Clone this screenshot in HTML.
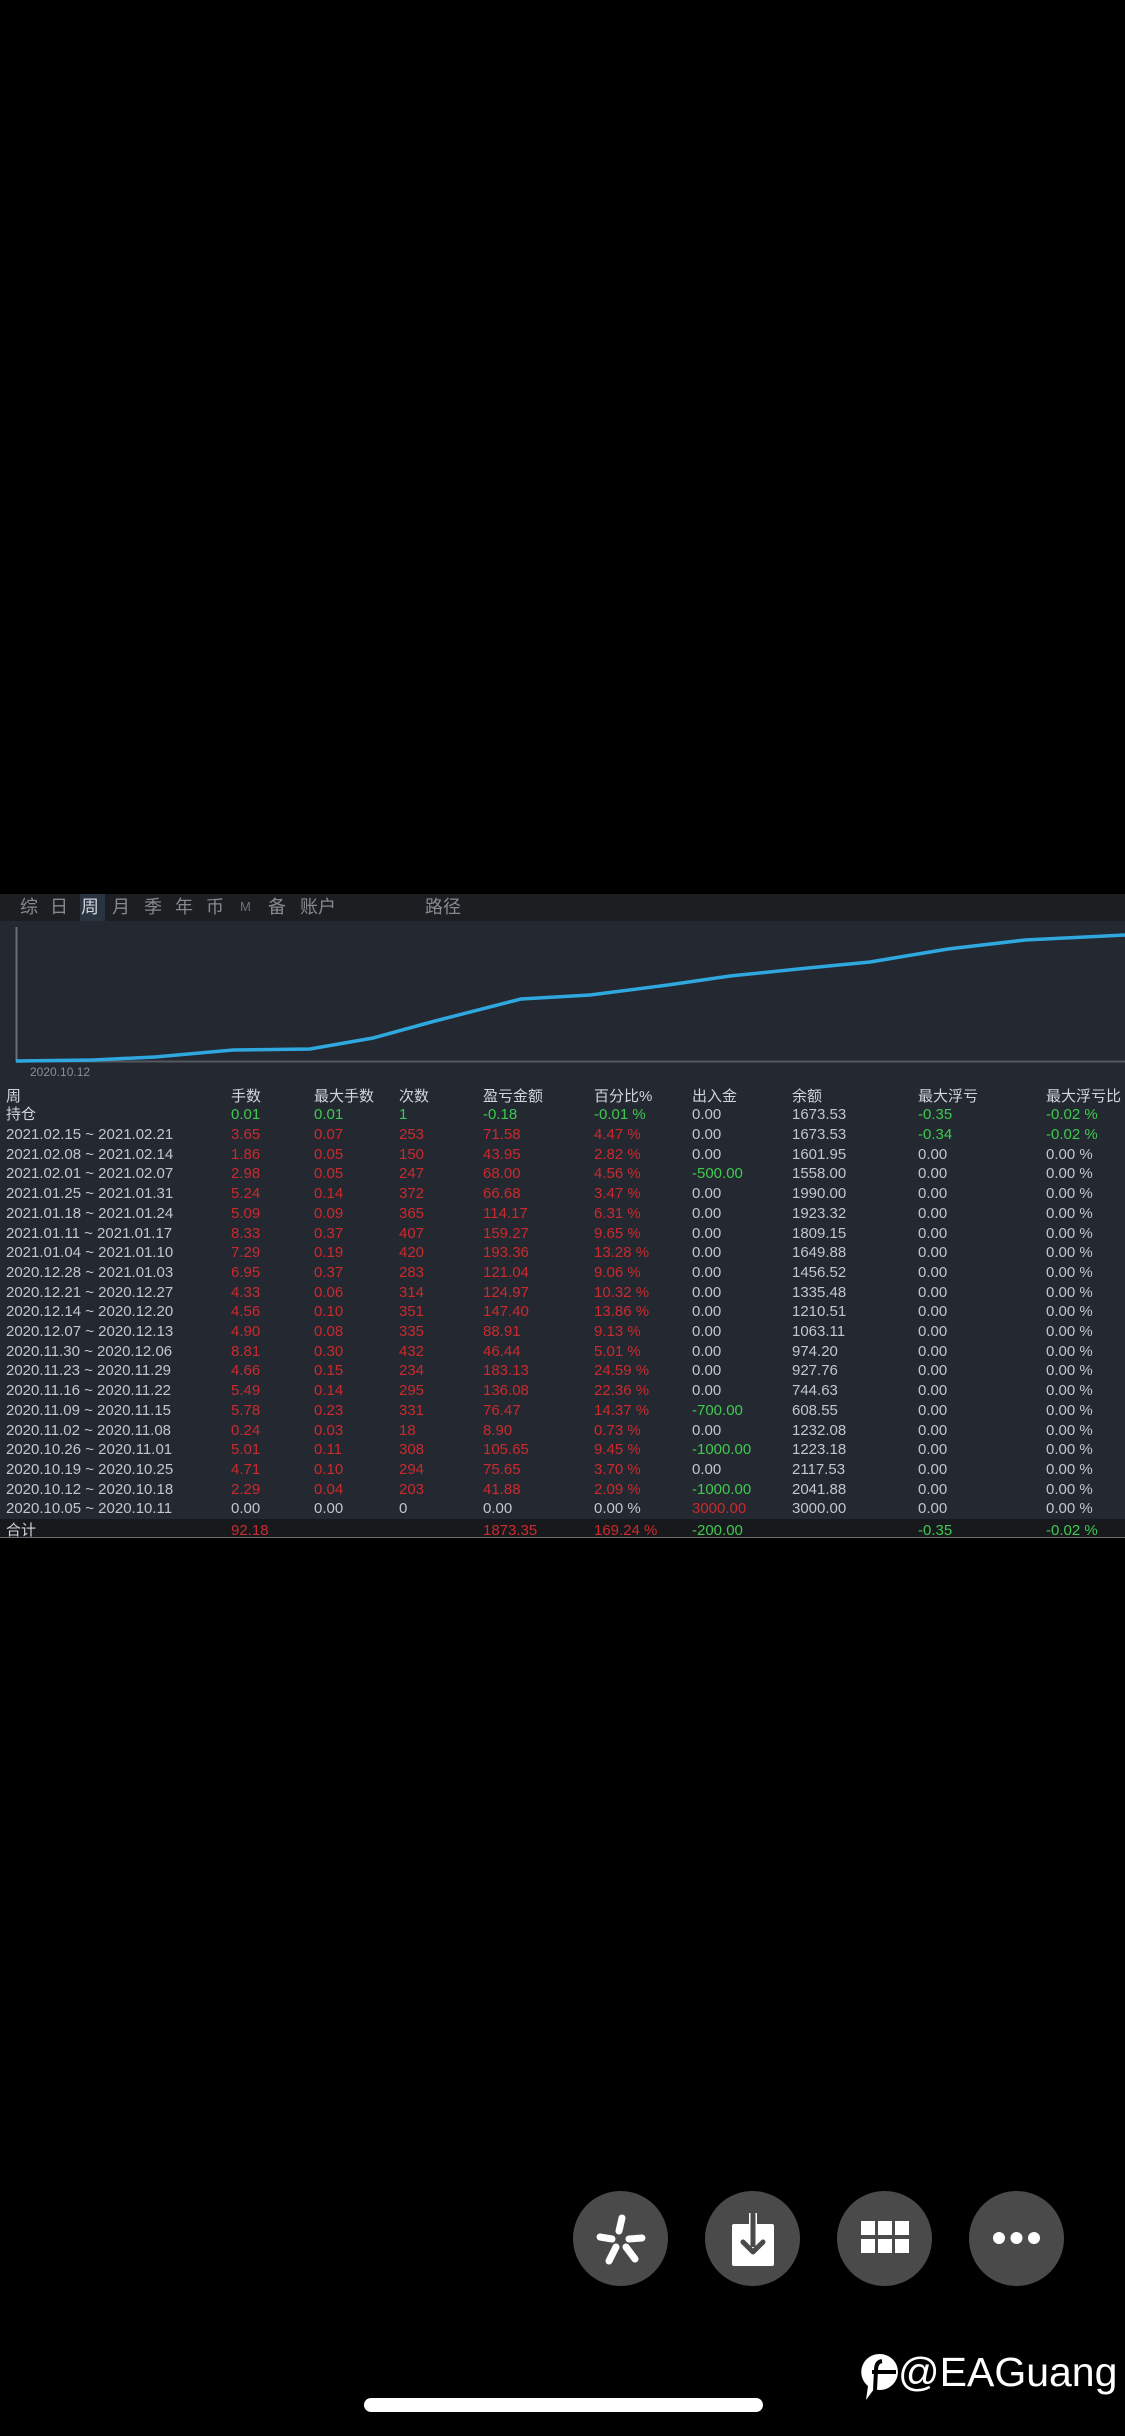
<!DOCTYPE html>
<html><head><meta charset="utf-8"><style>
*{margin:0;padding:0;box-sizing:border-box}
body{width:1125px;height:2436px;background:#000;position:relative;overflow:hidden;font-family:"Liberation Sans","Noto Sans CJK SC",sans-serif}
.abs{position:absolute}
.tabs{left:0;top:894px;width:1125px;height:27px;background:#1c1e22}
.tabs span{position:absolute;top:2px;font-size:18px;line-height:22px;color:#868a90}
.chart{left:0;top:921px;width:1125px;height:143px;background:#232831}
.table{left:0;top:1064px;width:1125px;height:455px;background:#232831}
.sum{left:0;top:1519px;width:1125px;height:19px;background:#17191c;border-bottom:1px solid #6a6d72;overflow:hidden}
.r{position:absolute;left:0;width:1125px;height:20px;font-size:15px;line-height:20px;color:#c2c6cd;white-space:nowrap}
.r span{position:absolute;top:0}
.g{color:#3fc94f}.d{color:#cc2a2c}.h{color:#d2d5da}
.c0{left:6px}.c1{left:231px}.c2{left:314px}.c3{left:399px}.c4{left:483px}.c5{left:594px}.c6{left:692px}.c7{left:792px}.c8{left:918px}.c9{left:1046px}
.btn{position:absolute;top:2191px;width:95px;height:95px;border-radius:50%;background:#4a4a4a}
</style></head><body>
<div class="abs tabs">
<span style="left:20px">综</span><span style="left:50px">日</span>
<span style="left:80px;top:0;width:25px;height:27px;background:#2a3340;color:#d0d4da;padding-left:1px;line-height:27px">周</span>
<span style="left:112px">月</span><span style="left:144px">季</span><span style="left:175px">年</span><span style="left:206px">币</span>
<span style="left:240px;font-size:13px;color:#6c7076">M</span><span style="left:268px">备</span><span style="left:300px">账户</span><span style="left:425px">路径</span>
</div>
<div class="abs chart">
<svg width="1125" height="143" style="position:absolute;left:0;top:0">
<line x1="16.5" y1="6" x2="16.5" y2="141" stroke="#6a6e74" stroke-width="2"/>
<line x1="16" y1="140.5" x2="1125" y2="140.5" stroke="#55595f" stroke-width="2"/>
<polyline fill="none" stroke="#2fa8e0" stroke-width="3.5" points="16,140 93,139 155,136 233,129 310,128 373,117 435,100 521,78 590,74 668,64 730,55 808,47 870,41 948,28 1025,19 1125,14"/>
</svg>
</div>
<div class="abs table"></div>
<div class="abs" style="left:30px;top:1065px;font-size:12px;color:#8a8f96;line-height:14px">2020.10.12</div>
<div class="abs sum"></div>

<div class="r h" style="top:1087px"><span class="c0">周</span><span class="c1">手数</span><span class="c2">最大手数</span><span class="c3">次数</span><span class="c4">盈亏金额</span><span class="c5">百分比%</span><span class="c6">出入金</span><span class="c7">余额</span><span class="c8">最大浮亏</span><span class="c9">最大浮亏比</span></div>
<div class="r" style="top:1105px"><span class="c0 h">持仓</span><span class="c1 g">0.01</span><span class="c2 g">0.01</span><span class="c3 g">1</span><span class="c4 g">-0.18</span><span class="c5 g">-0.01 %</span><span class="c6">0.00</span><span class="c7">1673.53</span><span class="c8 g">-0.35</span><span class="c9 g">-0.02 %</span></div>
<div class="r" style="top:1125px"><span class="c0">2021.02.15 ~ 2021.02.21</span><span class="c1 d">3.65</span><span class="c2 d">0.07</span><span class="c3 d">253</span><span class="c4 d">71.58</span><span class="c5 d">4.47 %</span><span class="c6">0.00</span><span class="c7">1673.53</span><span class="c8 g">-0.34</span><span class="c9 g">-0.02 %</span></div>
<div class="r" style="top:1144.7px"><span class="c0">2021.02.08 ~ 2021.02.14</span><span class="c1 d">1.86</span><span class="c2 d">0.05</span><span class="c3 d">150</span><span class="c4 d">43.95</span><span class="c5 d">2.82 %</span><span class="c6">0.00</span><span class="c7">1601.95</span><span class="c8">0.00</span><span class="c9">0.00 %</span></div>
<div class="r" style="top:1164.4px"><span class="c0">2021.02.01 ~ 2021.02.07</span><span class="c1 d">2.98</span><span class="c2 d">0.05</span><span class="c3 d">247</span><span class="c4 d">68.00</span><span class="c5 d">4.56 %</span><span class="c6 g">-500.00</span><span class="c7">1558.00</span><span class="c8">0.00</span><span class="c9">0.00 %</span></div>
<div class="r" style="top:1184.1px"><span class="c0">2021.01.25 ~ 2021.01.31</span><span class="c1 d">5.24</span><span class="c2 d">0.14</span><span class="c3 d">372</span><span class="c4 d">66.68</span><span class="c5 d">3.47 %</span><span class="c6">0.00</span><span class="c7">1990.00</span><span class="c8">0.00</span><span class="c9">0.00 %</span></div>
<div class="r" style="top:1203.8px"><span class="c0">2021.01.18 ~ 2021.01.24</span><span class="c1 d">5.09</span><span class="c2 d">0.09</span><span class="c3 d">365</span><span class="c4 d">114.17</span><span class="c5 d">6.31 %</span><span class="c6">0.00</span><span class="c7">1923.32</span><span class="c8">0.00</span><span class="c9">0.00 %</span></div>
<div class="r" style="top:1223.5px"><span class="c0">2021.01.11 ~ 2021.01.17</span><span class="c1 d">8.33</span><span class="c2 d">0.37</span><span class="c3 d">407</span><span class="c4 d">159.27</span><span class="c5 d">9.65 %</span><span class="c6">0.00</span><span class="c7">1809.15</span><span class="c8">0.00</span><span class="c9">0.00 %</span></div>
<div class="r" style="top:1243.2px"><span class="c0">2021.01.04 ~ 2021.01.10</span><span class="c1 d">7.29</span><span class="c2 d">0.19</span><span class="c3 d">420</span><span class="c4 d">193.36</span><span class="c5 d">13.28 %</span><span class="c6">0.00</span><span class="c7">1649.88</span><span class="c8">0.00</span><span class="c9">0.00 %</span></div>
<div class="r" style="top:1262.9px"><span class="c0">2020.12.28 ~ 2021.01.03</span><span class="c1 d">6.95</span><span class="c2 d">0.37</span><span class="c3 d">283</span><span class="c4 d">121.04</span><span class="c5 d">9.06 %</span><span class="c6">0.00</span><span class="c7">1456.52</span><span class="c8">0.00</span><span class="c9">0.00 %</span></div>
<div class="r" style="top:1282.6px"><span class="c0">2020.12.21 ~ 2020.12.27</span><span class="c1 d">4.33</span><span class="c2 d">0.06</span><span class="c3 d">314</span><span class="c4 d">124.97</span><span class="c5 d">10.32 %</span><span class="c6">0.00</span><span class="c7">1335.48</span><span class="c8">0.00</span><span class="c9">0.00 %</span></div>
<div class="r" style="top:1302.3px"><span class="c0">2020.12.14 ~ 2020.12.20</span><span class="c1 d">4.56</span><span class="c2 d">0.10</span><span class="c3 d">351</span><span class="c4 d">147.40</span><span class="c5 d">13.86 %</span><span class="c6">0.00</span><span class="c7">1210.51</span><span class="c8">0.00</span><span class="c9">0.00 %</span></div>
<div class="r" style="top:1322px"><span class="c0">2020.12.07 ~ 2020.12.13</span><span class="c1 d">4.90</span><span class="c2 d">0.08</span><span class="c3 d">335</span><span class="c4 d">88.91</span><span class="c5 d">9.13 %</span><span class="c6">0.00</span><span class="c7">1063.11</span><span class="c8">0.00</span><span class="c9">0.00 %</span></div>
<div class="r" style="top:1341.7px"><span class="c0">2020.11.30 ~ 2020.12.06</span><span class="c1 d">8.81</span><span class="c2 d">0.30</span><span class="c3 d">432</span><span class="c4 d">46.44</span><span class="c5 d">5.01 %</span><span class="c6">0.00</span><span class="c7">974.20</span><span class="c8">0.00</span><span class="c9">0.00 %</span></div>
<div class="r" style="top:1361.4px"><span class="c0">2020.11.23 ~ 2020.11.29</span><span class="c1 d">4.66</span><span class="c2 d">0.15</span><span class="c3 d">234</span><span class="c4 d">183.13</span><span class="c5 d">24.59 %</span><span class="c6">0.00</span><span class="c7">927.76</span><span class="c8">0.00</span><span class="c9">0.00 %</span></div>
<div class="r" style="top:1381.1px"><span class="c0">2020.11.16 ~ 2020.11.22</span><span class="c1 d">5.49</span><span class="c2 d">0.14</span><span class="c3 d">295</span><span class="c4 d">136.08</span><span class="c5 d">22.36 %</span><span class="c6">0.00</span><span class="c7">744.63</span><span class="c8">0.00</span><span class="c9">0.00 %</span></div>
<div class="r" style="top:1400.8px"><span class="c0">2020.11.09 ~ 2020.11.15</span><span class="c1 d">5.78</span><span class="c2 d">0.23</span><span class="c3 d">331</span><span class="c4 d">76.47</span><span class="c5 d">14.37 %</span><span class="c6 g">-700.00</span><span class="c7">608.55</span><span class="c8">0.00</span><span class="c9">0.00 %</span></div>
<div class="r" style="top:1420.5px"><span class="c0">2020.11.02 ~ 2020.11.08</span><span class="c1 d">0.24</span><span class="c2 d">0.03</span><span class="c3 d">18</span><span class="c4 d">8.90</span><span class="c5 d">0.73 %</span><span class="c6">0.00</span><span class="c7">1232.08</span><span class="c8">0.00</span><span class="c9">0.00 %</span></div>
<div class="r" style="top:1440.2px"><span class="c0">2020.10.26 ~ 2020.11.01</span><span class="c1 d">5.01</span><span class="c2 d">0.11</span><span class="c3 d">308</span><span class="c4 d">105.65</span><span class="c5 d">9.45 %</span><span class="c6 g">-1000.00</span><span class="c7">1223.18</span><span class="c8">0.00</span><span class="c9">0.00 %</span></div>
<div class="r" style="top:1459.9px"><span class="c0">2020.10.19 ~ 2020.10.25</span><span class="c1 d">4.71</span><span class="c2 d">0.10</span><span class="c3 d">294</span><span class="c4 d">75.65</span><span class="c5 d">3.70 %</span><span class="c6">0.00</span><span class="c7">2117.53</span><span class="c8">0.00</span><span class="c9">0.00 %</span></div>
<div class="r" style="top:1479.6px"><span class="c0">2020.10.12 ~ 2020.10.18</span><span class="c1 d">2.29</span><span class="c2 d">0.04</span><span class="c3 d">203</span><span class="c4 d">41.88</span><span class="c5 d">2.09 %</span><span class="c6 g">-1000.00</span><span class="c7">2041.88</span><span class="c8">0.00</span><span class="c9">0.00 %</span></div>
<div class="r" style="top:1499.3px"><span class="c0">2020.10.05 ~ 2020.10.11</span><span class="c1">0.00</span><span class="c2">0.00</span><span class="c3">0</span><span class="c4">0.00</span><span class="c5">0.00 %</span><span class="c6 d">3000.00</span><span class="c7">3000.00</span><span class="c8">0.00</span><span class="c9">0.00 %</span></div>
<div class="r" style="top:1520px;height:18px;overflow:hidden;line-height:22px"><span class="c0 h">合计</span><span class="c1 d">92.18</span><span class="c4 d">1873.35</span><span class="c5 d">169.24 %</span><span class="c6 g">-200.00</span><span class="c8 g">-0.35</span><span class="c9 g">-0.02 %</span></div>

<div class="btn" style="left:573px"><svg width="95" height="95" viewBox="0 0 95 95"><g stroke="#fff" stroke-width="7" stroke-linecap="round"><line x1="49" y1="27" x2="46" y2="40"/><line x1="27" y1="46" x2="39" y2="48"/><line x1="56" y1="48" x2="69" y2="47"/><line x1="43" y1="56" x2="36" y2="70"/><line x1="53" y1="56" x2="62" y2="68"/></g></svg></div>
<div class="btn" style="left:705px"><svg width="95" height="95" viewBox="0 0 95 95"><rect x="27" y="33" width="42" height="42" rx="2" fill="#fff"/><rect x="44" y="22" width="8" height="14" fill="#fff"/><rect x="45.5" y="22" width="5" height="34" fill="#4a4a4a"/><path d="M38 51 L48 61 L58 51" fill="none" stroke="#4a4a4a" stroke-width="5" stroke-linecap="round" stroke-linejoin="round"/></svg></div>
<div class="btn" style="left:837px"><svg width="95" height="95" viewBox="0 0 95 95"><g fill="#fff"><rect x="24" y="30" width="14" height="14"/><rect x="41" y="30" width="14" height="14"/><rect x="58" y="30" width="14" height="14"/><rect x="24" y="48" width="14" height="14"/><rect x="41" y="48" width="14" height="14"/><rect x="58" y="48" width="14" height="14"/></g></svg></div>
<div class="btn" style="left:969px"><svg width="95" height="95" viewBox="0 0 95 95"><g fill="#fff"><circle cx="30" cy="47" r="6"/><circle cx="47.5" cy="47" r="6"/><circle cx="65" cy="47" r="6"/></g></svg></div>

<svg class="abs" style="left:858px;top:2352px" width="42" height="50" viewBox="0 0 42 50"><path d="M22 2 A18 18 0 1 1 16 37 L8 48 L10 34 A18 18 0 0 1 22 2 Z" fill="#fff"/><path d="M14 20 L38 20 M24 9 Q18 10 18 18 L17 38" fill="none" stroke="#000" stroke-width="4"/></svg>
<div class="abs" style="left:898px;top:2348px;font-size:41px;line-height:48px;color:#fff">@EAGuang</div>
<div class="abs" style="left:364px;top:2398px;width:399px;height:14px;border-radius:7px;background:#fff"></div>
</body></html>
